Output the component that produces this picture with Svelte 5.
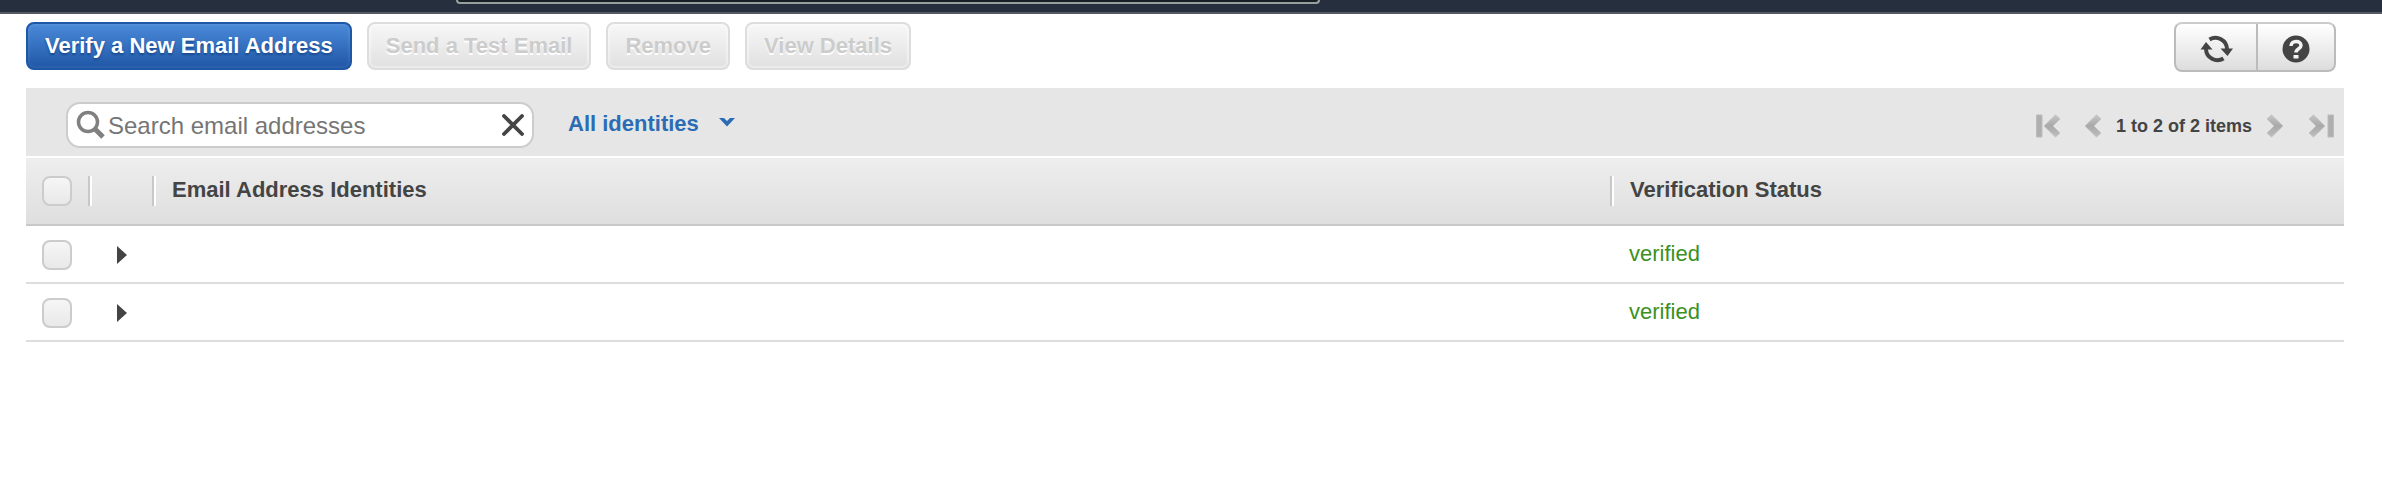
<script>
  const identities = [
    { id: 1, status: 'verified' },
    { id: 2, status: 'verified' }
  ];
  let query = $state('');
  let checked = $state([false, false]);
  let all = $state(false);

  function toggleAll() {
    checked = checked.map(() => all);
  }
</script>

{#snippet chevron()}
  <path d="M1 5L5.500 1L17 12L5.500 23L1 19L8 12Z" fill="url(#metal)" stroke="#c4c4c4" stroke-width="1" />
{/snippet}

<div class="nav"><div class="nav-search"></div></div>

<main>
  <div class="toolbar">
    <div class="actions">
      <button class="btn primary">Verify a New Email Address</button>
      <button class="btn" disabled>Send a Test Email</button>
      <button class="btn" disabled>Remove</button>
      <button class="btn" disabled>View Details</button>
    </div>
    <div class="tools">
      <button aria-label="Refresh">
        <svg width="34" height="30" viewBox="0 0 34 30">
          <g fill="none" stroke="#444" stroke-width="4">
            <path d="M10.500 5.500A11.500 11.500 0 0 1 28 15" />
            <path d="M24.500 24.500A11.500 11.500 0 0 1 7 15" />
          </g>
          <path d="M21.500 14.500H34L28.500 22Z M1.500 15.500H13.500L7 8Z" fill="#444" />
        </svg>
      </button>
      <button aria-label="Help">
        <svg width="28" height="28" viewBox="0 0 28 28">
          <circle cx="14" cy="14" r="13.500" fill="#444" />
          <path d="M9 11C9 5 19 5 19 10.500C19 14 14 13.500 14 17.500" fill="none" stroke="#f4f4f4" stroke-width="3.500" />
          <path d="M11.500 20H16.500V23.500H11.500Z" fill="#f4f4f4" />
        </svg>
      </button>
    </div>
  </div>

  <div class="filters">
    <div class="search">
      <svg width="30" height="30" viewBox="0 0 30 30" fill="none" stroke="#808080">
        <circle cx="12" cy="12" r="9.500" stroke-width="3.500" />
        <path d="M19 19L27 27" stroke-width="5" />
      </svg>
      <input type="text" aria-label="Search email addresses" placeholder="Search email addresses" bind:value={query} />
      <button aria-label="Clear search" onclick={() => (query = '')}>
        <svg width="22" height="22" viewBox="0 0 22 22">
          <path d="M2 2L20 20M20 2L2 20" stroke="#444" stroke-width="3.800" stroke-linecap="round" />
        </svg>
      </button>
    </div>
    <button class="scope">
      All identities
      <svg width="16" height="12" viewBox="0 0 16 12">
        <path d="M0 0H5L8 3L11 0H16L8 8.500Z" fill="#2b6cb5" />
      </svg>
    </button>
    <nav class="pager" aria-label="Pages">
      <button class="first" aria-label="First page" disabled>
        <svg width="26" height="24" viewBox="0 0 26 24">
          <defs>
            <linearGradient id="metal" x1="0" y1="0" x2="0" y2="1">
              <stop offset="0" stop-color="#c4c4c4" />
              <stop offset="0.500" stop-color="#a9a9a9" />
              <stop offset="1" stop-color="#bebebe" />
            </linearGradient>
          </defs>
          <path d="M2.500 1H8V23H2.500Z" fill="#afafaf" stroke="#bcbcbc" />
          <g transform="translate(27 0) scale(-1 1)">{@render chevron()}</g>
        </svg>
      </button>
      <button class="prev" aria-label="Previous page" disabled>
        <svg width="18" height="24" viewBox="0 0 18 24"><g transform="translate(18 0) scale(-1 1)">{@render chevron()}</g></svg>
      </button>
      <span>1 to 2 of 2 items</span>
      <button class="next" aria-label="Next page" disabled>
        <svg width="18" height="24" viewBox="0 0 18 24">{@render chevron()}</svg>
      </button>
      <button class="last" aria-label="Last page" disabled>
        <svg width="26" height="24" viewBox="0 0 26 24">
          {@render chevron()}
          <path d="M20 1H25.500V23H20Z" fill="#afafaf" stroke="#bcbcbc" />
        </svg>
      </button>
    </nav>
  </div>

  <table>
    <colgroup>
      <col class="c-check" />
      <col class="c-expand" />
      <col />
      <col class="c-status" />
    </colgroup>
    <thead>
      <tr>
        <th><input type="checkbox" aria-label="Select all" bind:checked={all} onchange={toggleAll} /></th>
        <th><div class="label"></div></th>
        <th><div class="label">Email Address Identities</div></th>
        <th><div class="label">Verification Status</div></th>
      </tr>
    </thead>
    <tbody>
      {#each identities as row, i (row.id)}
        <tr>
          <td class="control"><input type="checkbox" aria-label="Select identity" bind:checked={checked[i]} /></td>
          <td class="control">
            <button class="expand" aria-label="Expand">
              <svg width="10" height="18" viewBox="0 0 10 18"><path d="M0 0L10 9L0 18Z" fill="#444" /></svg>
            </button>
          </td>
          <td></td>
          <td class="status">{row.status}</td>
        </tr>
      {/each}
    </tbody>
  </table>
</main>

<style>
  :global(body) {
    margin: 0;
    background: #fff;
    color: #444;
    font-family: "Liberation Sans", Arial, sans-serif;
    font-size: 22px;
    line-height: 26px;
  }
  button, input {
    font: inherit;
    margin: 0;
    box-sizing: border-box;
  }
  button {
    padding: 0;
    border: 0;
    background: none;
    color: inherit;
  }
  svg {
    display: block;
    flex: none;
  }
  .nav {
    height: 12px;
    padding: 0 1062px 0 456px;
    background: #262f3e;
    border-bottom: 2px solid #545b64;
  }
  .nav-search {
    height: 2px;
    background: #1a1f25;
    border: 2px solid #95a09f;
    border-top: 0;
    border-radius: 0 0 4px 4px;
  }
  main {
    padding: 8px 38px 0 26px;
  }
  .toolbar {
    display: flex;
    justify-content: space-between;
    align-items: flex-start;
    padding: 0 8px 16px 0;
  }
  .actions {
    display: flex;
    gap: 15px;
  }
  .btn {
    height: 48px;
    padding: 0 17px;
    border: 2px solid #ddd;
    border-radius: 8px;
    background: linear-gradient(#f7f7f7, #e0e0e0);
    box-shadow: inset 0 0 2px 2px rgba(255, 255, 255, 0.4);
    color: #ccc;
    font-weight: bold;
    text-shadow: 0 2px 0 #fff;
  }
  .primary {
    border-color: #1d57a6;
    background: linear-gradient(#4a8ad9, #1f57a6);
    box-shadow: inset 0 0 2px 2px rgba(255, 255, 255, 0.06);
    color: #fff;
    text-shadow: 0 2px 2px #1a4a8f;
  }
  .tools {
    display: flex;
    height: 50px;
    box-sizing: border-box;
    border: 2px solid #bbb;
    border-top-color: #ccc;
    border-radius: 8px;
    background: linear-gradient(#fff, #ddd);
  }
  .tools button {
    display: flex;
    align-items: center;
    justify-content: center;
    width: 76px;
    padding-top: 4px;
  }
  .tools button:first-child {
    width: 82px;
    border-right: 2px solid #bbb;
  }
  .filters {
    display: flex;
    align-items: center;
    height: 68px;
    padding: 0 10px 0 40px;
    background: #e6e6e6;
    border-bottom: 2px solid #fff;
  }
  .search {
    display: flex;
    align-items: center;
    width: 468px;
    height: 46px;
    box-sizing: border-box;
    margin-top: 6px;
    padding: 0 8px;
    border: 2px solid #ccc;
    border-radius: 14px;
    background: #fff;
  }
  .search input {
    flex: 1;
    min-width: 0;
    height: 40px;
    padding: 2px 0 0 2px;
    border: 0;
    outline: 0;
    background: none;
    font-size: 24px;
  }
  .search input::placeholder {
    color: #757575;
    opacity: 1;
  }
  .scope {
    display: flex;
    align-items: center;
    gap: 20px;
    margin-left: 34px;
    padding-top: 4px;
    color: #2b6cb5;
    font-weight: bold;
  }
  .pager {
    display: flex;
    align-items: center;
    margin-left: auto;
    padding-top: 8px;
    font-size: 18px;
    font-weight: bold;
  }
  .pager span {
    margin: 0 14px;
  }
  .prev {
    margin-left: 24px;
  }
  .last {
    margin-left: 24px;
  }
  table {
    width: 100%;
    table-layout: fixed;
    border-collapse: separate;
    border-spacing: 0;
  }
  .c-check {
    width: 62px;
  }
  .c-expand {
    width: 64px;
  }
  .c-status {
    width: 734px;
  }
  thead tr {
    background: linear-gradient(#eee, #dedede);
  }
  th {
    height: 66px;
    padding: 0;
    border-bottom: 2px solid #c8c8c8;
    text-align: left;
  }
  td {
    height: 56px;
    padding: 0;
    border-bottom: 2px solid #ddd;
  }
  .control {
    height: 54px;
    padding-top: 2px;
  }
  .label {
    height: 30px;
    padding-left: 18px;
    border-left: 2px solid #c8c8c8;
    box-shadow: inset 2px 0 #fff;
    line-height: 28px;
  }
  input[type="checkbox"] {
    display: block;
    appearance: none;
    width: 30px;
    height: 30px;
    margin-left: 16px;
    border: 2px solid #ccc;
    border-radius: 8px;
    background: linear-gradient(#f6f6f6, #e9e9e9);
  }
  input[type="checkbox"]:checked {
    background: #2b6cb5;
  }
  .expand {
    display: block;
    margin-left: 29px;
  }
  .status {
    padding-left: 19px;
    color: #3a9122;
  }
</style>
